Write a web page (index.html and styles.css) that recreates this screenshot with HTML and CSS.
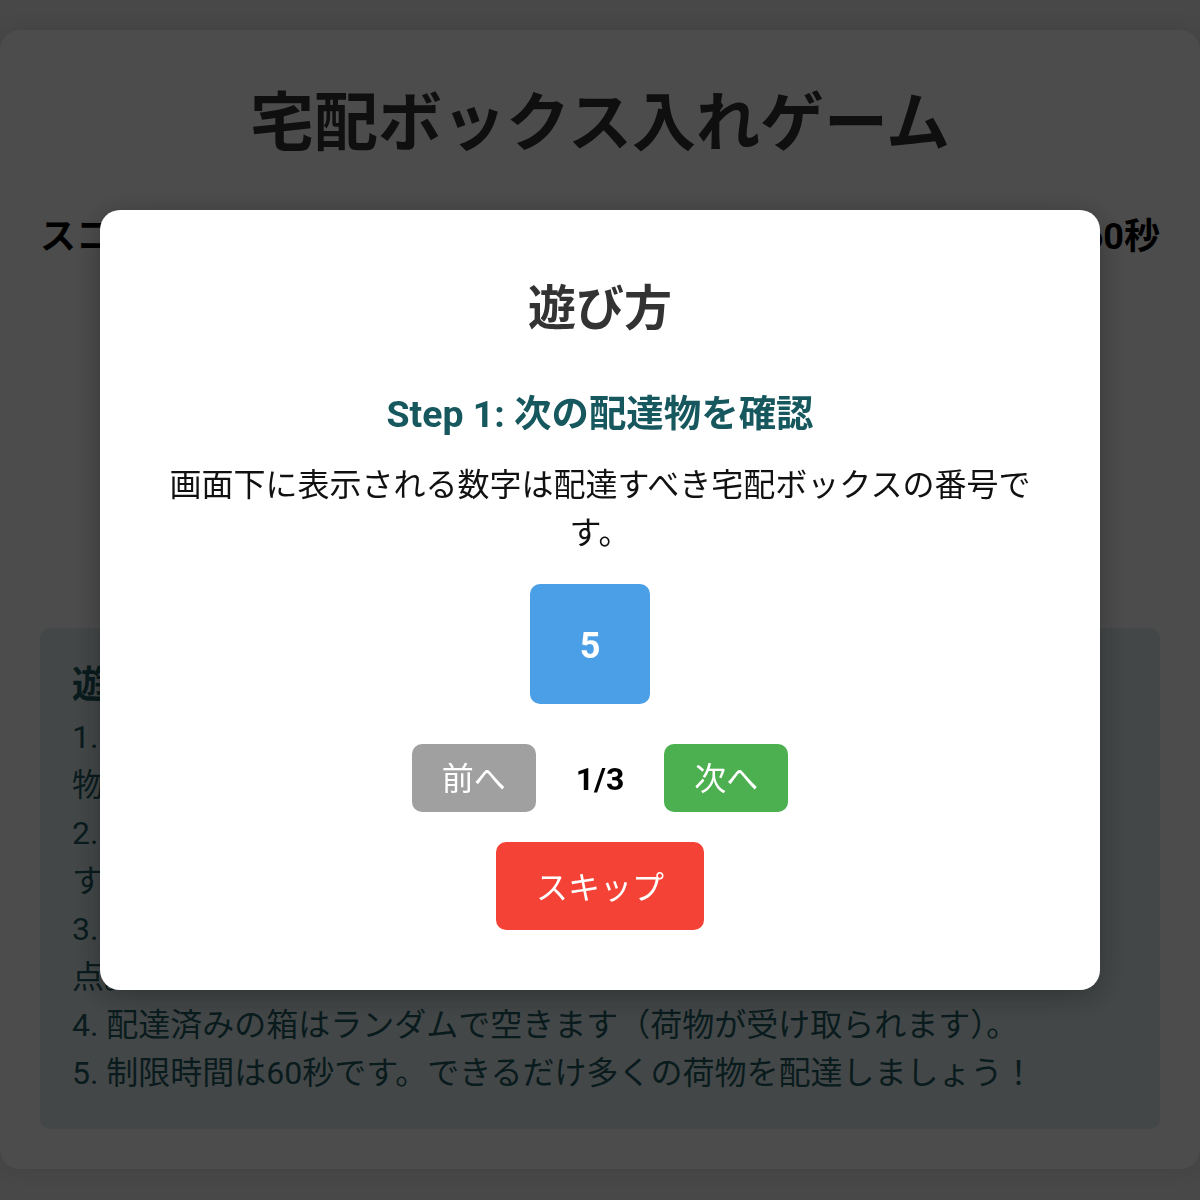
FILE: index.html
```html
<!DOCTYPE html>
<html lang="ja">
<head>
<meta charset="utf-8">
<title>宅配ボックス入れゲーム</title>
<link rel="stylesheet" href="styles.css">
</head>
<body>
<div class="container">
  <h1 class="title">宅配ボックス入れゲーム</h1>
  <div class="status">
    <span>スコア: 0</span>
    <span>残り時間: 60秒</span>
  </div>
  <div class="board">
    <div class="box">1</div><div class="box">2</div><div class="box">3</div>
    <div class="box">4</div><div class="box">5</div><div class="box">6</div>
    <div class="box">7</div><div class="box">8</div><div class="box">9</div>
  </div>
  <div class="rules">
    <h3 class="rules-title">遊び方</h3>
    <p>1. 画面下に表示される数字と同じ番号の宅配ボックスをクリックして荷物を入れます。</p>
    <p>2. 正しい番号の宅配ボックスへ荷物を入れることでスコアが加算されます。</p>
    <p>3. 間違った番号や使用中の宅配ボックスに荷物を入れようとすると減点。</p>
    <p>4. 配達済みの箱はランダムで空きます（荷物が受け取られます）。</p>
    <p>5. 制限時間は60秒です。できるだけ多くの荷物を配達しましょう！</p>
  </div>
</div>

<div class="overlay">
  <div class="modal">
    <h2 class="modal-title">遊び方</h2>
    <h3 class="step-title">Step 1: 次の配達物を確認</h3>
    <p class="step-text">画面下に表示される数字は配達すべき宅配ボックスの番号です。</p>
    <div class="sample-row">
      <div class="sample-box">5</div>
    </div>
    <div class="nav">
      <button class="btn btn-prev">前へ</button>
      <span class="page">1/3</span>
      <button class="btn btn-next">次へ</button>
    </div>
    <button class="btn btn-skip">スキップ</button>
  </div>
</div>
</body>
</html>
```
FILE: styles.css
```css
* {
  box-sizing: border-box;
}

body {
  margin: 0;
  padding: 30px 0 32px;
  background: #f0f0f0;
  font-family: Roboto, "Noto Sans CJK JP", sans-serif;
  color: #000;
}

.container {
  background: #fff;
  border-radius: 20px;
  padding: 40px;
  box-shadow: 0 0 20px rgba(0, 0, 0, 0.1);
}

.title {
  margin: 2px 0 0;
  font-size: 64px;
  line-height: 104px;
  font-weight: 700;
  color: #333;
  text-align: center;
}

.status {
  display: flex;
  justify-content: space-between;
  margin-top: 34px;
  font-size: 36px;
  line-height: 54px;
  font-weight: 700;
}

.board {
  display: grid;
  grid-template-columns: repeat(3, 90px);
  grid-auto-rows: 90px;
  gap: 15px;
  justify-content: center;
  margin: 30px 0 34px;
}

.box {
  background: #8d6e63;
  border-radius: 10px;
  color: #fff;
  font-size: 32px;
  font-weight: 700;
  display: flex;
  align-items: center;
  justify-content: center;
}

.rules {
  background: #e3eef1;
  border-radius: 10px;
  padding: 32px;
  color: #225d63;
}

.rules-title {
  margin: 0 0 3px;
  font-size: 37.44px;
  line-height: 50px;
  font-weight: 700;
}

.rules p {
  margin: 0;
  font-size: 32px;
  line-height: 48px;
}

.overlay {
  position: fixed;
  inset: 0;
  background: rgba(0, 0, 0, 0.7);
  display: flex;
  align-items: center;
  justify-content: center;
}

.modal {
  width: 1000px;
  background: #fff;
  border-radius: 20px;
  padding: 60px;
  text-align: center;
  box-shadow: 0 6px 30px rgba(0, 0, 0, 0.3);
}

.modal-title {
  margin: 0 0 36px;
  font-size: 48px;
  line-height: 78px;
  font-weight: 700;
  color: #333;
}

.step-title {
  margin: 0 0 17px;
  font-size: 37.44px;
  line-height: 60px;
  font-weight: 700;
  color: #17585f;
}

.step-text {
  margin: 0 0 27px;
  font-size: 32px;
  line-height: 48px;
  color: #111;
}

.sample-row {
  display: flex;
  justify-content: center;
  padding-right: 20px;
  margin-bottom: 40px;
}

.sample-box {
  width: 120px;
  height: 120px;
  padding-top: 4px;
  background: #4a9fe6;
  border-radius: 10px;
  color: #fff;
  font-size: 36px;
  font-weight: 700;
  display: flex;
  align-items: center;
  justify-content: center;
}

.nav {
  display: flex;
  justify-content: center;
  align-items: center;
  gap: 40px;
  margin-bottom: 30px;
}

.page {
  font-size: 32px;
  line-height: 48px;
  padding-top: 2px;
  font-weight: 700;
  color: #000;
}

.btn {
  border: none;
  border-radius: 10px;
  color: #fff;
  font-family: inherit;
  font-size: 32px;
  line-height: 48px;
  padding: 11px 30px 9px;
  cursor: pointer;
}

.btn-prev {
  background: #a0a0a0;
}

.btn-next {
  background: #4caf50;
}

.btn-skip {
  background: #f44336;
  padding: 22px 40px 18px;
}
```
